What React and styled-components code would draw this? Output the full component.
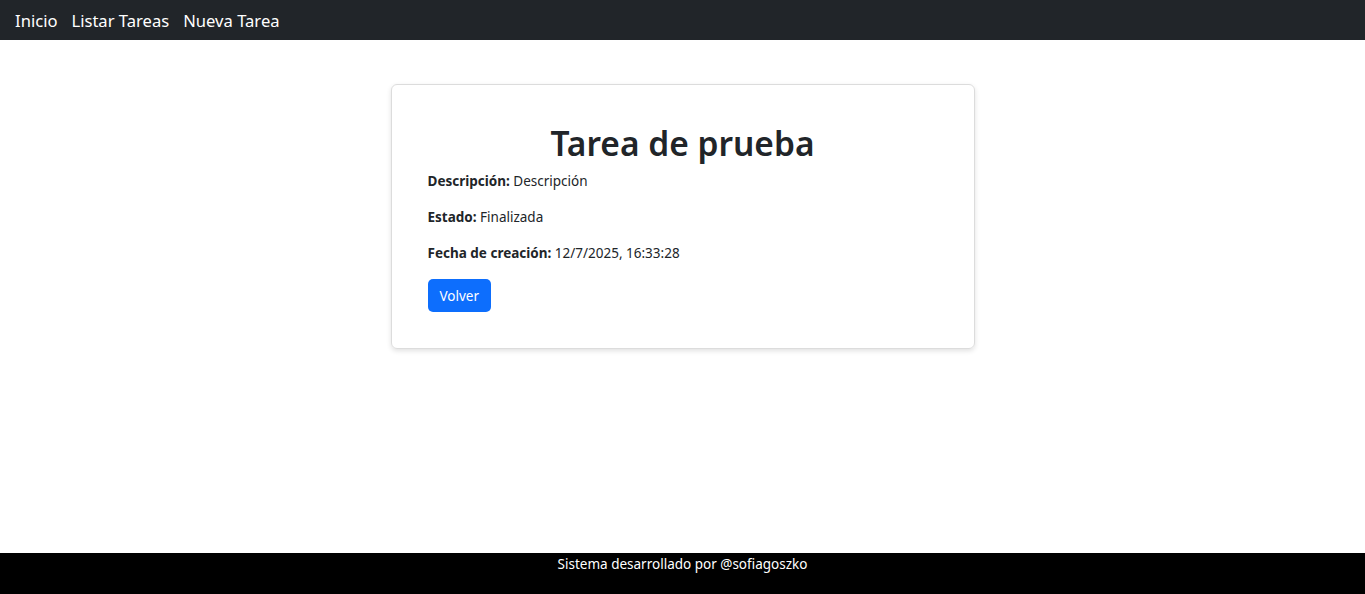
import React from 'react';
import styled, { createGlobalStyle } from 'styled-components';

const GlobalStyle = createGlobalStyle`
  body {
    margin: 0;
    font-family: "Noto Sans", "Open Sans", sans-serif;
    color: #212529;
    background: #fff;
  }
  * { box-sizing: border-box; }
`;

const Page = styled.div`
  min-height: 100vh;
  display: flex;
  flex-direction: column;
`;

const NavBar = styled.nav`
  height: 40px;
  background-color: #212529;
  display: flex;
  align-items: center;
  gap: 14px;
  padding: 0 15px;
`;

const NavLink = styled.a`
  color: #fff;
  font-size: 16.6px;
  text-decoration: none;
  cursor: pointer;
`;

const Main = styled.main`
  flex: 1;
  display: flex;
  justify-content: center;
  align-items: flex-start;
  padding-top: 44px;
`;

const Card = styled.div`
  width: 584px;
  border: 1px solid #dcdcdc;
  border-radius: 6px;
  box-shadow: 0 2px 5px rgba(0, 0, 0, 0.12);
  padding: 38px 36px 36px 36px;
`;

const Title = styled.h1`
  margin: 0 0 8px;
  text-align: center;
  font-size: 33.5px;
  font-weight: 600;
  line-height: 1.2;
`;

const Field = styled.p`
  margin: 0 0 15px;
  font-size: 13.5px;
  line-height: 21px;

  strong {
    font-weight: 700;
  }
`;

const Button = styled.button`
  height: 33px;
  padding: 0 12px;
  border: none;
  border-radius: 5px;
  background-color: #0d6efd;
  color: #fff;
  font-family: inherit;
  font-size: 13.5px;
  cursor: pointer;
`;

const Footer = styled.footer`
  height: 41px;
  background-color: #000;
  color: #fff;
  text-align: center;
  font-size: 13.5px;
  line-height: 22px;
`;

export default function App() {
  return (
    <Page>
      <GlobalStyle />
      <NavBar>
        <NavLink>Inicio</NavLink>
        <NavLink>Listar Tareas</NavLink>
        <NavLink>Nueva Tarea</NavLink>
      </NavBar>
      <Main>
        <Card>
          <Title>Tarea de prueba</Title>
          <Field>
            <strong>Descripción:</strong> Descripción
          </Field>
          <Field>
            <strong>Estado:</strong> Finalizada
          </Field>
          <Field>
            <strong>Fecha de creación:</strong> 12/7/2025, 16:33:28
          </Field>
          <Button>Volver</Button>
        </Card>
      </Main>
      <Footer>Sistema desarrollado por @sofiagoszko</Footer>
    </Page>
  );
}
